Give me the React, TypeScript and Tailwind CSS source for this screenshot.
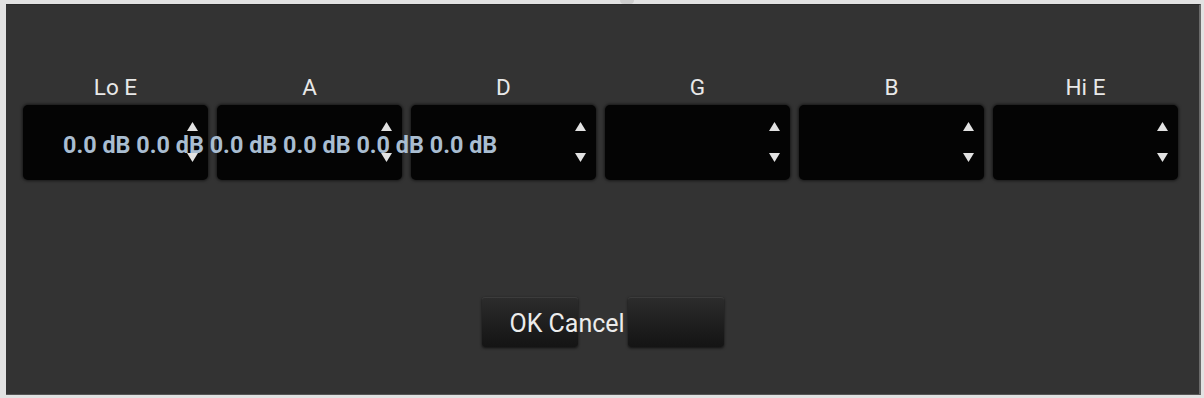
import React from "react";

const labels = ["Lo E", "A", "D", "G", "B", "Hi E"];

function Arrows() {
  return (
    <div className="absolute right-[10px] top-[17px] z-20 flex flex-col items-center gap-[22px]">
      <svg width="11" height="9" viewBox="0 0 11 9">
        <polygon points="5.5,0 11,9 0,9" fill="#e2e2e2" />
      </svg>
      <svg width="11" height="9" viewBox="0 0 11 9">
        <polygon points="0,0 11,0 5.5,9" fill="#e2e2e2" />
      </svg>
    </div>
  );
}

export default function App() {
  return (
    <div
      className="w-[1204px] h-[398px] bg-[#e2e2e2] flex flex-col"
      style={{ fontFamily: "Roboto, 'Noto Sans', 'Liberation Sans', sans-serif" }}
    >
      <div className="h-[4px] flex justify-center pl-[50px]">
        <div className="w-[14px] h-[4px] rounded-b-[4px] bg-[#cdcdcd]" />
      </div>
      <div className="flex flex-1 pl-[6px] pr-[3px] pb-[3px]">
        <div className="flex-1 bg-[#333333] border-t border-[#2a2a2a] border-r-2 border-r-[#6a6a6a] border-b border-b-[#555] flex flex-col">
          <div className="pt-[69px] pl-[17px]">
            <div className="grid grid-cols-[repeat(6,185px)] gap-x-[9px]">
              {labels.map((l) => (
                <div
                  key={l}
                  className="text-center text-[22.5px] leading-[26px] text-[#e8e8e8]"
                >
                  {l}
                </div>
              ))}
            </div>
            <div className="grid grid-cols-[repeat(6,185px)] gap-x-[9px] mt-[5px]">
              {labels.map((l, i) => (
                <div
                  key={l}
                  className="relative h-[75px] rounded-[5px] bg-[#040404] shadow-[0_0_3px_1px_rgba(0,0,0,0.55)]"
                >
                  {i === 0 && (
                    <div className="absolute left-[40px] top-[27px] z-10 whitespace-nowrap text-[23.4px] leading-[27px] font-bold text-[#a9bdd1]">
                      0.0 dB 0.0 dB 0.0 dB 0.0 dB 0.0 dB 0.0 dB
                    </div>
                  )}
                  <Arrows />
                </div>
              ))}
            </div>
          </div>
          <div className="flex justify-center gap-[50px] mt-[117px]">
            <div className="relative w-[96px] h-[50px] rounded-[3px] border-t border-[#3c3c3c] bg-gradient-to-b from-[#2c2c2c] to-[#141414] shadow-[0_1px_3px_rgba(0,0,0,0.7)]">
              <div className="absolute left-[28px] top-[11px] z-10 whitespace-nowrap text-[25px] leading-[29px] text-[#ececec]">
                OK Cancel
              </div>
            </div>
            <div className="w-[96px] h-[50px] rounded-[3px] border-t border-[#3c3c3c] bg-gradient-to-b from-[#2c2c2c] to-[#141414] shadow-[0_1px_3px_rgba(0,0,0,0.7)]" />
          </div>
        </div>
      </div>
    </div>
  );
}
